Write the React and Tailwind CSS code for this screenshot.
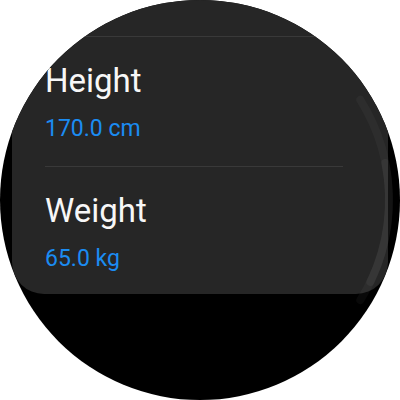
import React from "react";

const items = [
  { label: "Height", value: "170.0 cm" },
  { label: "Weight", value: "65.0 kg" },
];

const ScrollIndicator = () => (
  <svg className="absolute inset-0 pointer-events-none" width="400" height="400" viewBox="0 0 400 400">
    {/* track */}
    <path
      d="M360.3 99.8 A189 189 0 0 1 360.3 300.2"
      fill="none"
      stroke="#ffffff"
      strokeOpacity="0.035"
      strokeWidth="8"
      strokeLinecap="round"
    />
    {/* thumb */}
    <path
      d="M385.3 163 A189 189 0 0 1 370.3 282"
      fill="none"
      stroke="#ffffff"
      strokeOpacity="0.045"
      strokeWidth="8"
      strokeLinecap="round"
    />
  </svg>
);

const App = () => {
  return (
    <div className="w-[400px] h-[400px] bg-white" style={{ fontFamily: "Roboto, 'Noto Sans', sans-serif" }}>
      <div className="relative w-[400px] h-[400px] rounded-full bg-black overflow-hidden">
        <div className="mx-[12px] bg-[#262626] rounded-b-[32px] pt-[36px] pb-[1px]">
          {items.map((item, i) => (
            <div
              key={item.label}
              className={
                "ml-[33px] w-[298px] border-t border-[#393939] pt-[24px] " +
                (i === items.length - 1 ? "pb-[18px]" : "pb-[21px]")
              }
            >
              <div className="text-[33px] leading-[40px] text-[#f7f7f7]">{item.label}</div>
              <div className="mt-[12px] text-[23px] leading-[32px] text-[#1b8cf2]">{item.value}</div>
            </div>
          ))}
        </div>
        <ScrollIndicator />
      </div>
    </div>
  );
};

export default App;
